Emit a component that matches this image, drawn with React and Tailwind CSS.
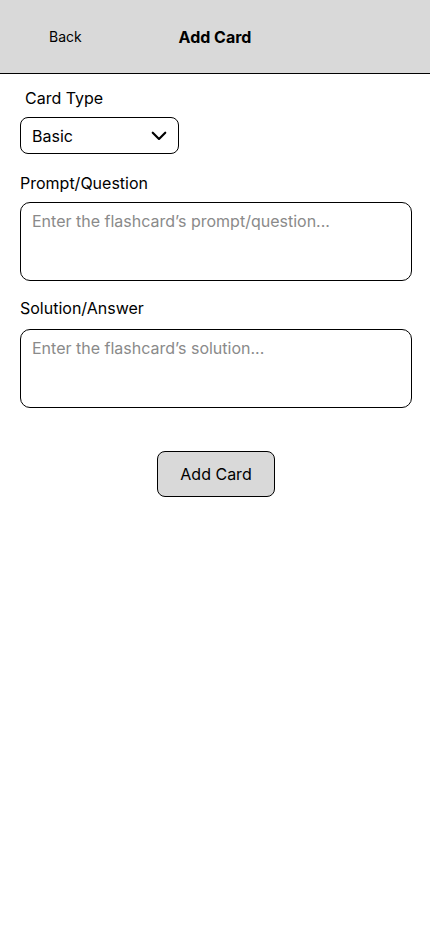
import React from 'react'

function Chevron() {
    return (
        <svg width="20" height="20" viewBox="0 0 24 24" fill="none" stroke="black" strokeWidth="2.6" strokeLinecap="round" strokeLinejoin="round">
            <path d="M4.5 8l7.5 7.5 7.5-7.5" />
        </svg>
    )
}

export default function App() {
    return (
        <div className="min-h-[932px] w-[430px] bg-white text-black" style={{ fontFamily: 'Inter, "Liberation Sans", sans-serif' }}>
            <div className="grid h-[74px] grid-cols-[1fr_auto_1fr] items-center border-b border-black bg-[#d9d9d9]">
                <button className="justify-self-start pl-[49px] text-sm text-black">Back</button>
                <h1 className="text-base font-bold">Add Card</h1>
                <div />
            </div>

            <div className="flex flex-col pl-5 pr-[18px]">
                <label className="mt-3 pl-[5px] text-base leading-6">Card Type</label>
                <div className="mt-[7px] flex h-[37px] w-[159px] items-center justify-between rounded-lg border border-black pl-[11px] pr-[9px]">
                    <span className="text-base">Basic</span>
                    <Chevron />
                </div>

                <label className="mt-[17px] text-base leading-6">Prompt/Question</label>
                <div className="mt-[7px] h-[79px] rounded-[10px] border border-black px-[11px] pt-[6px] text-base text-[#8a8a8a]">
                    Enter the flashcard’s prompt/question...
                </div>

                <label className="mt-[15px] text-base leading-6">Solution/Answer</label>
                <div className="mt-[9px] h-[79px] rounded-[10px] border border-black px-[11px] pt-[6px] text-base text-[#8a8a8a]">
                    Enter the flashcard’s solution...
                </div>

                <div className="mt-[43px] flex justify-center">
                    <button className="h-[46px] w-[118px] rounded-lg border border-black bg-[#d9d9d9] text-base">Add Card</button>
                </div>
            </div>
        </div>
    )
}
